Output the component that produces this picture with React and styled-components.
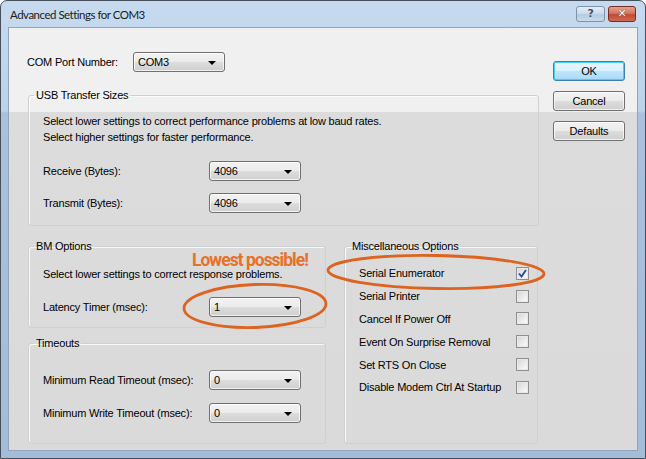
import React from 'react'
import styled, { createGlobalStyle } from 'styled-components'

const GlobalStyle = createGlobalStyle`
  html, body {
    margin: 0;
    padding: 0;
    background: #ffffff;
  }
  body {
    font-family: "Liberation Sans", Arial, sans-serif;
    font-size: 11px;
    letter-spacing: -0.2px;
    color: #000;
  }
`

const Window = styled.div`
  position: relative;
  width: 646px;
  height: 459px;
  box-sizing: border-box;
  border: 1px solid #46505c;
  border-radius: 7px 7px 0 0;
  background: linear-gradient(#c6daef 0, #bcd2ea 110px, #a9c1dc 112px, #a3bcd8 100%);
  display: flex;
  flex-direction: column;
  overflow: hidden;
`

const TitleBar = styled.div`
  height: 26px;
  display: flex;
  align-items: center;
  padding: 0 9px 0 9px;
`

const Title = styled.div`
  flex: 1;
  font-family: Lato, "Liberation Sans", sans-serif;
  font-size: 11.5px;
  letter-spacing: -0.5px;
  color: #1b1b1b;
  padding-top: 1px;
`

const CaptionButton = styled.div`
  width: ${p => (p.$close ? 26 : 27)}px;
  height: 14px;
  margin-left: ${p => (p.$close ? 3 : 0)}px;
  border: 1px solid ${p => (p.$close ? '#7a2a22' : '#7d93ad')};
  border-radius: 3px;
  display: flex;
  align-items: center;
  justify-content: center;
  background: ${p =>
    p.$close
      ? 'linear-gradient(#e4a291 0, #d37560 45%, #c04a33 55%, #cf6b52 100%)'
      : 'linear-gradient(#e3edf7 0, #cddcec 45%, #b6cbe1 55%, #c9dbee 100%)'};
  color: ${p => (p.$close ? '#ffffff' : '#3d4e63')};
  font-family: "DejaVu Sans", sans-serif;
  font-weight: bold;
  font-size: 11px;
  line-height: 14px;
  text-shadow: ${p => (p.$close ? '0 0 1px #5a1a10' : '0 0 1px #ffffff')};
`

const Client = styled.div`
  flex: 1;
  margin: 0 7px 7px 7px;
  border: 1px solid #8ea6c2;
  background: linear-gradient(#f0f0f0 0, #f0f0f0 84px, #dcdcdc 84px, #dadada 100%);
  display: flex;
`

const Main = styled.div`
  width: 511px;
  padding: 24px 0 0 19px;
  display: flex;
  flex-direction: column;
`

const Row = styled.div`
  display: flex;
  align-items: center;
  height: 20px;
  flex-shrink: 0;
  margin-top: ${p => p.$top || 0}px;
`

const Label = styled.div`
  width: ${p => p.$width}px;
  flex-shrink: 0;
`

const Combo = styled.div`
  position: relative;
  width: 92px;
  height: 20px;
  box-sizing: border-box;
  border: 1px solid #707070;
  border-radius: 3px;
  background: linear-gradient(#f3f3f3 0, #ebebeb 50%, #dddddd 51%, #cfcfcf 100%);
  box-shadow: inset 0 0 0 1px rgba(255, 255, 255, 0.7);
  padding-left: 4px;
  line-height: 18px;
  display: flex;
  align-items: center;

  &::after {
    content: '';
    position: absolute;
    right: 8px;
    top: 8px;
    border-left: 4px solid transparent;
    border-right: 4px solid transparent;
    border-top: 4px solid #000;
  }
`

const Group = styled.fieldset`
  margin: ${p => p.$top || 0}px 0 0 0;
  padding: ${p => p.$pad || 0}px 8px 0 14px;
  height: ${p => p.$height}px;
  flex-shrink: 0;
  box-sizing: border-box;
  border: 1px solid #ccd1d5;
  border-radius: 3px;
  box-shadow: inset 1px 1px 0 rgba(255, 255, 255, 0.8);
  min-width: 0;
`

const Legend = styled.legend`
  padding: 0 2px;
  margin-left: -9px;
  line-height: 13px;
`

const Note = styled.div`
  line-height: 16px;
`

const BottomArea = styled.div`
  display: flex;
  gap: 18px;
`

const LeftColumn = styled.div`
  width: 298px;
  display: flex;
  flex-direction: column;
`

const RightColumn = styled.div`
  width: 194px;
  display: flex;
  flex-direction: column;
`

const OptionRow = styled.div`
  display: flex;
  align-items: center;
  justify-content: space-between;
  height: 22.8px;
`

const Check = styled.div`
  width: 13px;
  height: 13px;
  box-sizing: border-box;
  border: 1px solid #8f8f8f;
  background: linear-gradient(135deg, #d4d4d4 0, #f2f2f2 70%, #fbfbfb 100%);
  box-shadow: inset 0 0 0 1px #e8e8e8;
  display: flex;
  align-items: center;
  justify-content: center;
`

const Buttons = styled.div`
  margin-left: 14px;
  padding-top: 33px;
  display: flex;
  flex-direction: column;
  gap: 10px;
`

const Button = styled.div`
  width: 72px;
  height: 20px;
  box-sizing: border-box;
  border: 1px solid ${p => (p.$default ? '#3c7fb1' : '#707070')};
  border-radius: 3px;
  background: ${p =>
    p.$default
      ? 'linear-gradient(#eaf6fd 0, #d9f0fc 50%, #bee6fd 51%, #a7d9f5 100%)'
      : 'linear-gradient(#f2f2f2 0, #ebebeb 50%, #dddddd 51%, #cfcfcf 100%)'};
  box-shadow: inset 0 0 0 1px ${p => (p.$default ? '#48d0f5' : 'rgba(255,255,255,0.7)')};
  display: flex;
  align-items: center;
  justify-content: center;
`

const Callout = styled.div`
  position: absolute;
  left: 191px;
  top: 249px;
  font-family: Roboto, "Open Sans", sans-serif;
  font-weight: 700;
  font-size: 17.5px;
  letter-spacing: -1px;
  color: #e8712a;
  white-space: nowrap;
`

const Marks = styled.svg`
  position: absolute;
  left: 0;
  top: 0;
  pointer-events: none;
`

const CheckMark = () => (
  <svg width="9" height="9" viewBox="0 0 9 9">
    <path d="M1 4.5 L3.5 7.5 L8 1" fill="none" stroke="#24479b" strokeWidth="1.8" />
  </svg>
)

const options = [
  ['Serial Enumerator', true],
  ['Serial Printer', false],
  ['Cancel If Power Off', false],
  ['Event On Surprise Removal', false],
  ['Set RTS On Close', false],
  ['Disable Modem Ctrl At Startup', false],
]

const App = () => {
  return (
    <>
      <GlobalStyle />
      <Window>
        <TitleBar>
          <Title>Advanced Settings for COM3</Title>
          <CaptionButton>?</CaptionButton>
          <CaptionButton $close>✕</CaptionButton>
        </TitleBar>
        <Client>
          <Main>
            <Row style={{ marginLeft: -1 }}>
              <Label $width={106}>COM Port Number:</Label>
              <Combo>COM3</Combo>
            </Row>

            <Group $top={17} $height={137} $pad={11}>
              <Legend>USB Transfer Sizes</Legend>
              <Note>Select lower settings to correct performance problems at low baud rates.</Note>
              <Note>Select higher settings for faster performance.</Note>
              <Row $top={16}>
                <Label $width={166}>Receive (Bytes):</Label>
                <Combo>4096</Combo>
              </Row>
              <Row $top={12}>
                <Label $width={166}>Transmit (Bytes):</Label>
                <Combo>4096</Combo>
              </Row>
            </Group>

            <BottomArea>
              <LeftColumn>
                <Group $top={14} $height={88} $pad={13}>
                  <Legend>BM Options</Legend>
                  <Note>Select lower settings to correct response problems.</Note>
                  <Row $top={15}>
                    <Label $width={166}>Latency Timer (msec):</Label>
                    <Combo>1</Combo>
                  </Row>
                </Group>
                <Group $top={9} $height={107} $pad={20}>
                  <Legend>Timeouts</Legend>
                  <Row>
                    <Label $width={166}>Minimum Read Timeout (msec):</Label>
                    <Combo>0</Combo>
                  </Row>
                  <Row $top={13}>
                    <Label $width={166}>Minimum Write Timeout (msec):</Label>
                    <Combo>0</Combo>
                  </Row>
                </Group>
              </LeftColumn>
              <RightColumn>
                <Group $top={14} $height={204} $pad={9}>
                  <Legend>Miscellaneous Options</Legend>
                  {options.map(([name, on]) => (
                    <OptionRow key={name}>
                      <span>{name}</span>
                      <Check>{on && <CheckMark />}</Check>
                    </OptionRow>
                  ))}
                </Group>
              </RightColumn>
            </BottomArea>
          </Main>

          <Buttons>
            <Button $default>OK</Button>
            <Button>Cancel</Button>
            <Button>Defaults</Button>
          </Buttons>
        </Client>

        <Callout>Lowest possible!</Callout>
        <Marks width="646" height="459">
          <ellipse cx="254" cy="305" rx="71" ry="21.5" transform="rotate(-2 254 305)"
            fill="none" stroke="#dc6420" strokeWidth="2.8" />
          <ellipse cx="435" cy="271" rx="108" ry="16.5" transform="rotate(1 435 271)"
            fill="none" stroke="#dc6420" strokeWidth="2.8" />
        </Marks>
      </Window>
    </>
  )
}

export default App
